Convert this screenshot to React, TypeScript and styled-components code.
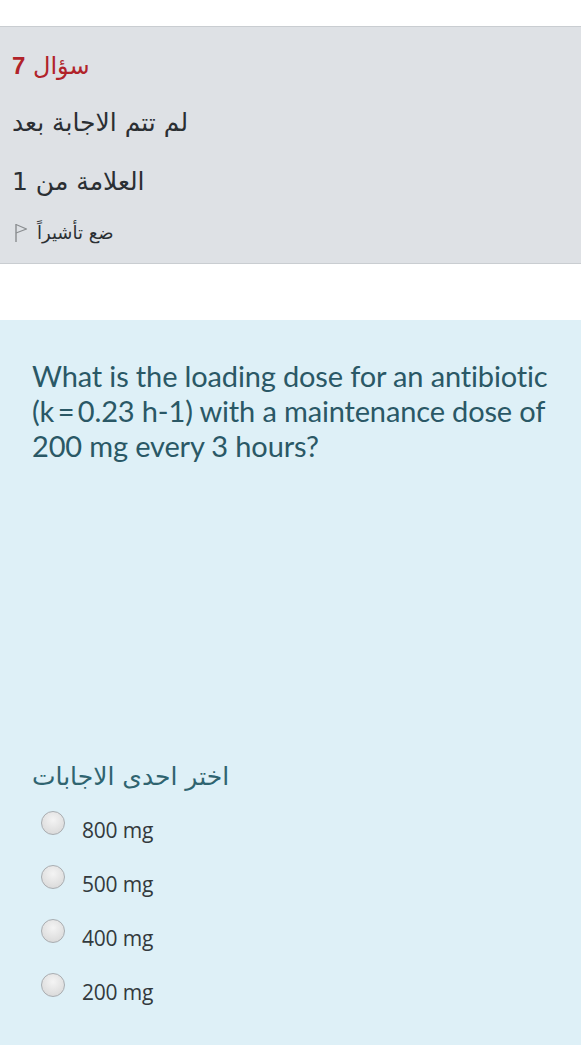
import React from "react";
import styled, { createGlobalStyle } from "styled-components";

const GlobalStyle = createGlobalStyle`
  html, body {
    margin: 0;
    padding: 0;
    background: #ffffff;
  }
  body {
    font-family: "Lato", "DejaVu Sans", sans-serif;
  }
`;

const Page = styled.div`
  width: 581px;
  height: 1050px;
  padding-top: 26px;
  box-sizing: border-box;
  background: #ffffff;
`;

const InfoBox = styled.div`
  background: #dee1e5;
  border-top: 1px solid #c9cdd1;
  border-bottom: 1px solid #c9cdd1;
  height: 238px;
  box-sizing: border-box;
  padding: 12px 12px 0;
  display: flex;
  flex-direction: column;
  align-items: flex-start;
`;

const InfoLine = styled.div<{ $size: number; $height: number }>`
  direction: rtl;
  font-family: "DejaVu Sans", sans-serif;
  font-size: ${(p) => p.$size}px;
  line-height: ${(p) => p.$height}px;
  color: #2b2f33;
`;

const QuestionNo = styled(InfoLine)`
  color: #b1232a;
`;

const Num = styled.b`
  font-family: "Liberation Sans", sans-serif;
  font-weight: 700;
`;

const FlagRow = styled.div`
  display: flex;
  align-items: center;
  gap: 9px;
  margin-top: 7px;
  padding-left: 2px;
`;

const ContentBox = styled.div`
  margin-top: 56px;
  background: #def0f7;
  height: 725px;
  box-sizing: border-box;
  padding: 38px 0 0 32px;
`;

const QuestionText = styled.div`
  font-family: "Lato", sans-serif;
  font-size: 29px;
  line-height: 35px;
  letter-spacing: -0.15px;
  white-space: nowrap;
  color: #2a5866;
`;

const Prompt = styled.div`
  margin-top: 299px;
  direction: rtl;
  text-align: left;
  font-family: "DejaVu Sans", sans-serif;
  font-size: 25px;
  line-height: 30px;
  color: #2f6470;
`;

const Answers = styled.div`
  display: flex;
  flex-direction: column;
  gap: 30px;
  margin-top: 23px;
  padding-left: 9px;
`;

const Answer = styled.label`
  display: flex;
  align-items: center;
  gap: 17px;
  height: 24px;
`;

const Radio = styled.span`
  width: 22px;
  height: 22px;
  border-radius: 50%;
  border: 1px solid #a9adb1;
  background: radial-gradient(circle at 50% 35%, #f4f4f4 0%, #dedede 70%, #cfcfcf 100%);
  margin-top: -8px;
`;

const AnswerText = styled.span`
  font-family: "Open Sans", sans-serif;
  font-size: 21px;
  font-weight: 500;
  letter-spacing: -0.2px;
  color: #333a3d;
  margin-top: 6px;
`;

const FlagIcon = () => (
  <svg width="14" height="20" viewBox="0 0 14 20">
    <path d="M2 1 L2 19" stroke="#8a8d90" strokeWidth="1.4" fill="none" />
    <path d="M2 1.5 L12.5 6 L2 10" stroke="#8a8d90" strokeWidth="1.2" fill="none" strokeLinejoin="round" />
  </svg>
);

const answers = ["800 mg", "500 mg", "400 mg", "200 mg"];

export default function App() {
  return (
    <Page>
      <GlobalStyle />
      <InfoBox>
        <QuestionNo $size={24} $height={54}>
          سؤال <Num>7</Num>
        </QuestionNo>
        <InfoLine $size={25} $height={60}>لم تتم الاجابة بعد</InfoLine>
        <InfoLine $size={25} $height={58}>العلامة من 1</InfoLine>
        <FlagRow>
          <FlagIcon />
          <InfoLine $size={18} $height={30}>ضع تأشيراً</InfoLine>
        </FlagRow>
      </InfoBox>
      <ContentBox>
        <QuestionText>
          What is the loading dose for an antibiotic
          <br />
          (k{"\u2009"}={"\u2009"}0.23 h-1) with a maintenance dose of
          <br />
          200 mg every 3 hours?
        </QuestionText>
        <Prompt>اختر احدى الاجابات</Prompt>
        <Answers>
          {answers.map((a) => (
            <Answer key={a}>
              <Radio />
              <AnswerText>{a}</AnswerText>
            </Answer>
          ))}
        </Answers>
      </ContentBox>
    </Page>
  );
}
